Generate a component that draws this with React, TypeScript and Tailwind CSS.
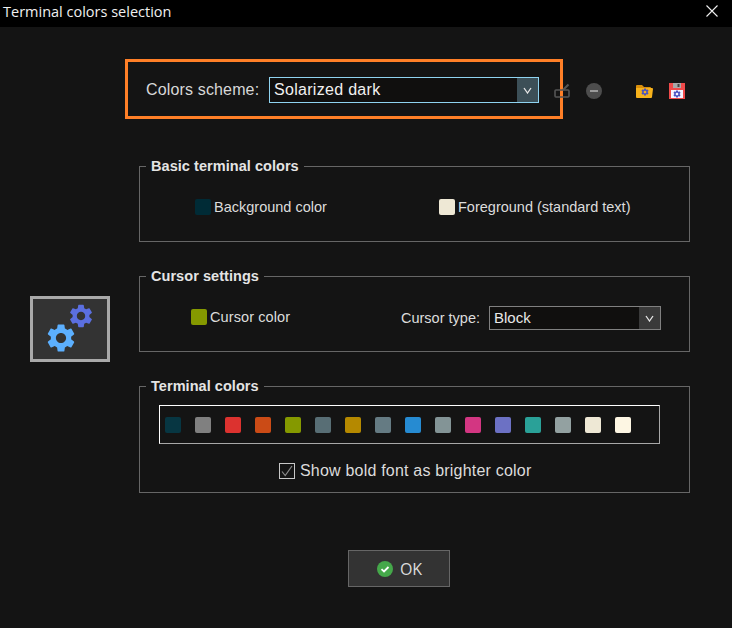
import React from "react";
import { MdSettings } from "react-icons/md";

const palette = ["#073642","#808080","#dc322f","#cb4b16","#859900","#586e75","#b58900","#657b83","#268bd2","#839496","#d33682","#6c71c4","#2aa198","#93a1a1","#eee8d5","#fdf6e3"];
const gear = "M19.14 12.94c.04-.3.06-.61.06-.94 0-.32-.02-.64-.07-.94l2.03-1.58c.18-.14.23-.41.12-.61l-1.92-3.32c-.12-.22-.37-.29-.59-.22l-2.39.96c-.5-.38-1.03-.7-1.62-.94l-.36-2.54c-.04-.24-.24-.41-.48-.41h-3.84c-.24 0-.43.17-.47.41l-.36 2.54c-.59.24-1.13.57-1.62.94l-2.39-.96c-.22-.08-.47 0-.59.22L2.74 8.87c-.12.21-.08.47.12.61l2.03 1.58c-.05.3-.09.63-.09.94s.02.64.07.94l-2.03 1.58c-.18.14-.23.41-.12.61l1.92 3.32c.12.22.37.29.59.22l2.39-.96c.5.38 1.03.7 1.62.94l.36 2.54c.05.24.24.41.48.41h3.84c.24 0 .44-.17.47-.41l.36-2.54c.59-.24 1.13-.56 1.62-.94l2.39.96c.22.08.47 0 .59-.22l1.92-3.32c.12-.22.07-.47-.12-.61l-2.01-1.58zM12 15.6c-1.98 0-3.6-1.62-3.6-3.6s1.62-3.6 3.6-3.6 3.6 1.62 3.6 3.6-1.62 3.6-3.6 3.6z";

function Chevron({ color = "#e6e6e6" }: { color?: string }) {
  return (
    <svg width="9" height="7" viewBox="0 0 9 7" fill="none">
      <path d="M1 1l3.5 5L8 1" stroke={color} strokeWidth="1.3" />
    </svg>
  );
}

function Group({ title, className, children }: { title: string; className: string; children: React.ReactNode }) {
  return (
    <fieldset className={"border border-[#666666] " + className}>
      <legend className="ml-[6px] px-[5px] text-[14.5px] tracking-[0.05px] leading-[16px] font-bold text-[#e4e4e4]">{title}</legend>
      {children}
    </fieldset>
  );
}

function Swatch({ color }: { color: string }) {
  return <span className="block w-[16px] h-[16px] rounded-[2px] shrink-0" style={{ backgroundColor: color }} />;
}

export default function App() {
  return (
    <div className="w-[732px] h-[628px] bg-[#141414] flex flex-col overflow-hidden text-[#dcdcdc] font-['Liberation_Sans',Arial,sans-serif]">
      <div className="h-[27px] bg-black flex justify-between pl-[3px] pr-[14px] shrink-0">
        <span className="text-[14.5px] leading-[24px] text-[#f0f0f0] font-['Open_Sans',sans-serif]">Terminal colors selection</span>
        <svg className="mt-[5px]" width="12" height="12" viewBox="0 0 12 12" fill="none">
          <path d="M0.5 0.5l11 11M11.5 0.5l-11 11" stroke="#f0f0f0" strokeWidth="1.1" />
        </svg>
      </div>
      <div className="flex flex-1">
        <div className="w-[139px] shrink-0 pl-[30px] pt-[269px]">
          <div className="w-[80px] h-[66px] bg-[#333333] border-[3px] border-[#a9a9a9] relative">
            <MdSettings className="absolute left-[11px] top-[22px] text-[#5cb0ff]" size={34} />
            <MdSettings className="absolute left-[34px] top-[3px] text-[#5b6fe0]" size={28} />
          </div>
        </div>
        <div className="w-[551px] shrink-0">
          <div className="flex items-center mt-[32px] -ml-[14px] h-[60px]">
            <div className="w-[438px] h-[60px] border-[3px] border-[#ff7f27] flex items-center pl-[18px] pt-[2px] shrink-0">
              <span className="text-[16px] tracking-[0.15px] leading-[20px] text-[#d8d8d8] w-[123px]">Colors scheme:</span>
              <div className="w-[270px] h-[26px] border border-[#8fd3f0] bg-[#100f0e] flex items-center justify-between">
                <span className="pl-[4px] text-[16px] tracking-[0.3px] text-[#f0f0f0] leading-[20px]">Solarized dark</span>
                <span className="w-[21px] h-full bg-[#3c4f57] flex items-center justify-center"><Chevron /></span>
              </div>
            </div>
            <svg className="ml-[-9px] mt-[4px] shrink-0" width="18" height="16" viewBox="0 0 18 16" fill="none">
              <rect x="1" y="7" width="14" height="7" rx="1" stroke="#555555" strokeWidth="1.6" />
              <path d="M9 7l5.500-5.500" stroke="#555555" strokeWidth="2.2" />
            </svg>
            <span className="ml-[14px] mt-[4px] w-[16px] h-[16px] rounded-full bg-[#4d4d4d] flex items-center justify-center shrink-0">
              <span className="block w-[8px] h-[2px] bg-[#9a9a9a]" />
            </span>
            <svg className="ml-[34px] mt-[4px] shrink-0" width="17" height="14" viewBox="0 0 17 14">
              <path d="M0 2a1 1 0 011-1h5l2 2h6a1 1 0 011 1v1H0z" fill="#d98f0c" />
              <path d="M0 4h16a1 1 0 011 1l-1 8a1 1 0 01-1 1H1a1 1 0 01-1-1z" fill="#f7b21b" />
              <svg x="4.500" y="3.500" width="9" height="9" viewBox="0 0 24 24"><path d={gear} fill="#4a52c0" /></svg>
            </svg>
            <svg className="ml-[16px] mt-[4px] shrink-0" width="16" height="16" viewBox="0 0 16 16">
              <rect width="16" height="16" fill="#f04a4a" />
              <rect x="4" y="0" width="8" height="5" fill="#a8a8a8" />
              <rect x="8.500" y="1" width="2" height="3" fill="#444444" />
              <rect x="2" y="7" width="12" height="8" fill="#f5f5ff" />
              <svg x="3.500" y="6.500" width="9" height="9" viewBox="0 0 24 24"><path d={gear} fill="#4a52c0" /></svg>
            </svg>
          </div>
          <Group title="Basic terminal colors" className="mt-[39px] h-[84px]">
            <div className="flex items-center pl-[55px] pt-[24px] text-[14.5px] leading-[18px]">
              <span className="flex items-center gap-[3px] w-[244px]">
                <Swatch color="#002b36" />Background color
              </span>
              <span className="flex items-center gap-[3px]">
                <Swatch color="#eee8d5" />Foreground (standard text)
              </span>
            </div>
          </Group>
          <Group title="Cursor settings" className="mt-[26px] h-[84px]">
            <div className="flex items-center pl-[51px] pt-[22px] text-[14.5px] leading-[18px]">
              <span className="flex items-center gap-[3px] w-[210px] mb-[2px] tracking-[0.1px]">
                <Swatch color="#859900" />Cursor color
              </span>
              <span className="w-[88px]">Cursor type:</span>
              <div className="w-[172px] h-[24px] border border-[#808080] bg-[#100f0e] flex items-center justify-between">
                <span className="pl-[4px] text-[15px] leading-[18px] text-[#e8e8e8]">Block</span>
                <span className="w-[21px] h-full bg-[#3a3a3a] flex items-center justify-center"><Chevron /></span>
              </div>
            </div>
          </Group>
          <Group title="Terminal colors" className="mt-[26px] h-[115px]">
            <div className="ml-[19px] mt-[11px] w-[501px] h-[39px] border border-t-white border-l-white border-r-[#a8a8a8] border-b-[#a8a8a8] flex items-center pl-[5px] gap-[14px]">
              {palette.map((c, i) => <Swatch key={i} color={c} />)}
            </div>
            <label className="flex items-center ml-[139px] mt-[17px] gap-[5px] text-[16px] tracking-[0.2px] leading-[20px]">
              <span className="w-[16px] h-[16px] border border-[#c8c8c8] flex items-center justify-center shrink-0">
                <svg width="12" height="12" viewBox="0 0 12 12" fill="none">
                  <path d="M1 6.500l3.200 4L11 1" stroke="#8a8a8a" strokeWidth="1.2" />
                </svg>
              </span>
              Show bold font as brighter color
            </label>
          </Group>
          <div className="ml-[209px] mt-[57px] w-[102px] h-[37px] bg-[#333333] border border-[#666666] flex items-center justify-center gap-[7px] pl-[1px]">
            <svg width="16" height="16" viewBox="0 0 16 16" fill="none">
              <circle cx="8" cy="8" r="8" fill="#45a84a" />
              <path d="M4.500 8.200l2.500 2.300 4.500-4.500" stroke="#ffffff" strokeWidth="1.800" />
            </svg>
            <span className="text-[16px] leading-[20px] text-[#dcdcdc] font-['Open_Sans',sans-serif]">OK</span>
          </div>
        </div>
      </div>
    </div>
  );
}
